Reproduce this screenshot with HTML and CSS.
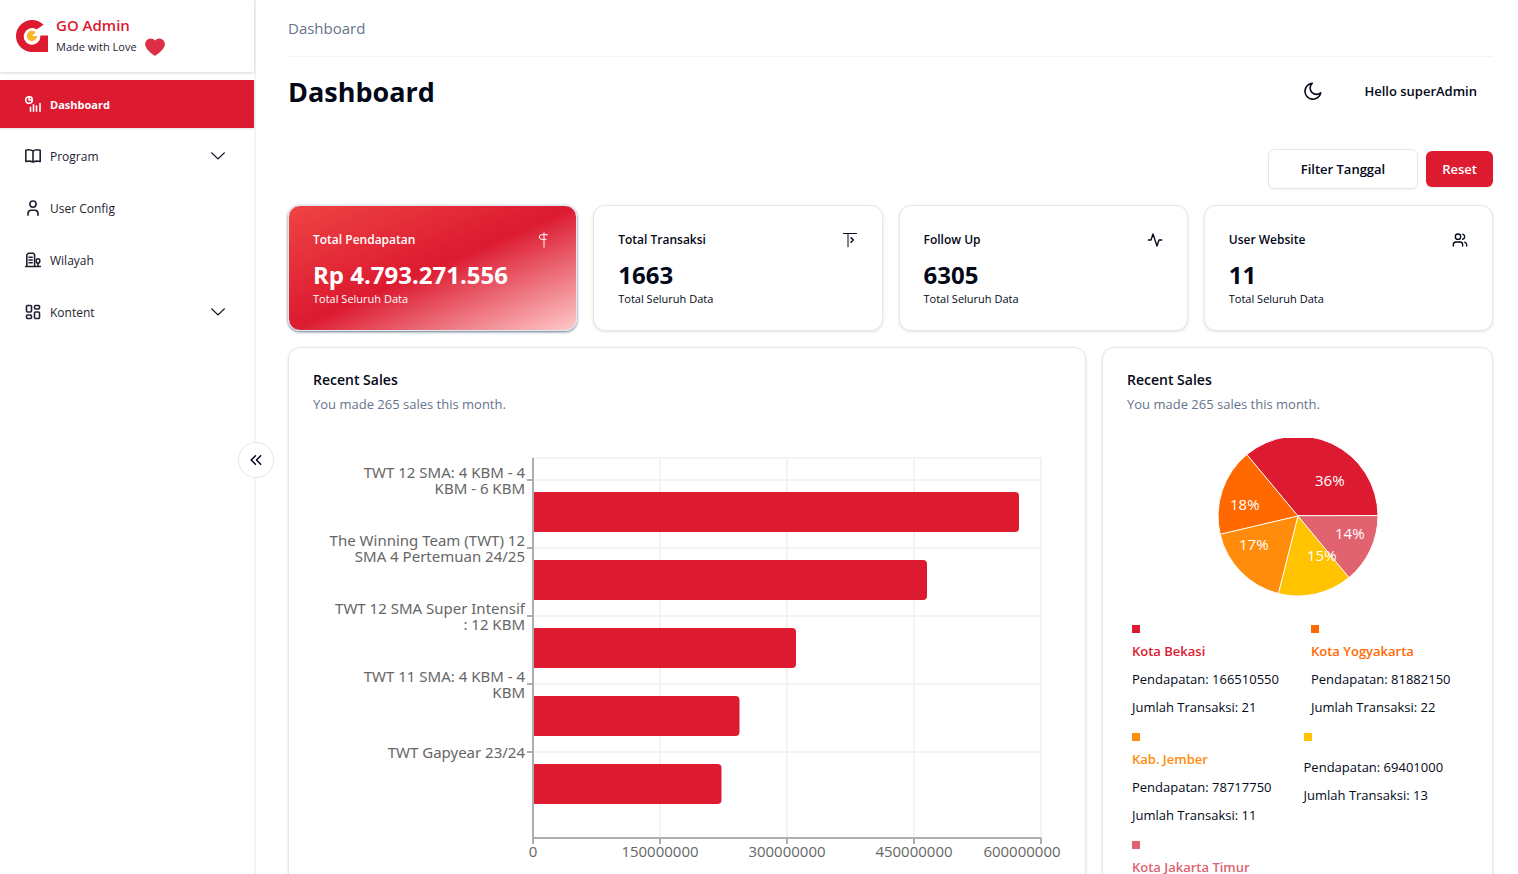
FILE: index.html
```html
<!DOCTYPE html>
<html lang="id">
<head>
<meta charset="utf-8">
<meta name="viewport" content="width=device-width, initial-scale=1">
<title>GO Admin - Dashboard</title>
<link rel="stylesheet" href="styles.css">
</head>
<body>
<div class="layout">
  <aside class="sidebar">
    <div class="brand">
      <svg class="brand-logo" viewBox="0 0 32 32" aria-hidden="true">
        <path fill="#dc1a30" d="M27.5 4.8A16 16 0 0 0 16 0 16 16 0 0 0 16 32H32V15.5H24.3A8.3 8.3 0 1 1 20.5 9.4Z"/>
        <path fill="#f9b52b" d="M16 16 19.6 12.2A5.2 5.2 0 1 0 21.2 16Z"/>
      </svg>
      <div class="brand-text">
        <span class="brand-name">GO Admin</span>
        <span class="brand-tag">Made with Love
          <svg class="heart" viewBox="0 0 20 18" aria-hidden="true"><path fill="#dd2e44" d="M19.7 5.3A5.4 5.4 0 0 0 10 2.6 5.4 5.4 0 0 0 .3 5.3C-.8 9.8 5.700 15.300 10 18 14.300 15.300 20.800 9.800 19.700 5.300Z"/></svg>
        </span>
      </div>
    </div>
    <nav class="nav">
      <a class="nav-item active" href="#">
        <svg class="icon" viewBox="0 0 16 16" aria-hidden="true"><circle cx="4" cy="4" r="3.300"/><path d="M4 1v3h3"/><path d="M5.500 15.200v-4M8.500 15.200v-6.500M11.500 15.200V10M15 15.200V7.500"/></svg>
        <span>Dashboard</span>
      </a>
      <a class="nav-item" href="#">
        <svg class="icon" viewBox="0 0 16 16" aria-hidden="true"><path d="M8 3.200C6.500 1.800 3.500 1.600.8 2.200v11.300c2.700-.5 5.700-.3 7.200.6 1.500-.9 4.500-1.100 7.200-.6V2.200C12.500 1.600 9.500 1.800 8 3.200ZM8 3.200v10.900"/></svg>
        <span>Program</span>
        <svg class="chevron" viewBox="0 0 14 8" aria-hidden="true"><path d="m.7.9 6.300 6 6.300-6"/></svg>
      </a>
      <a class="nav-item" href="#">
        <svg class="icon" viewBox="0 0 16 16" aria-hidden="true"><circle cx="8" cy="4.100" r="3.100"/><path d="M3 15.200v-1.700c0-2 1.300-3.300 3.200-3.300h3.600c1.900 0 3.200 1.300 3.200 3.300v1.700"/></svg>
        <span>User Config</span>
      </a>
      <a class="nav-item" href="#">
        <svg class="icon" viewBox="0 0 16 16" aria-hidden="true"><path d="M.7 14.500h14.600M1.800 14.500V3L3.400 1.300h5L9.600 2.800v11.700M4 5.200h3.200M4 8h3.200M4 10.800h3.200M13 14.500v-3.500"/><ellipse cx="13" cy="9" rx="1.800" ry="2.200"/></svg>
        <span>Wilayah</span>
      </a>
      <a class="nav-item" href="#">
        <svg class="icon" viewBox="0 0 16 16" aria-hidden="true"><rect x="1.500" y="1.500" width="5" height="6.500" rx="1"/><rect x="9.500" y="1.500" width="5" height="3.500" rx="1"/><rect x="1.500" y="11" width="5" height="3.500" rx="1"/><rect x="9.500" y="8" width="5" height="6.500" rx="1"/></svg>
        <span>Kontent</span>
        <svg class="chevron" viewBox="0 0 14 8" aria-hidden="true"><path d="m.7.9 6.300 6 6.300-6"/></svg>
      </a>
    </nav>
    <button class="collapse" type="button" aria-label="Collapse sidebar">
      <svg viewBox="0 0 12 10" aria-hidden="true"><path d="M5.500.8 1.200 5l4.300 4.200M10.700.8 6.400 5l4.300 4.200"/></svg>
    </button>
  </aside>

  <main class="main">
    <header class="crumbs"><a href="#">Dashboard</a></header>
    <div class="title-row">
      <h1>Dashboard</h1>
      <div class="user">
        <button class="theme" type="button" aria-label="Toggle theme">
          <svg viewBox="0 0 18 18" aria-hidden="true"><path d="M8.300 1.200A6.200 6.200 0 0 0 16.800 10.800 8 8 0 1 1 8.300 1.200Z"/></svg>
        </button>
        <button class="hello" type="button">Hello superAdmin</button>
      </div>
    </div>
    <div class="actions">
      <button class="btn-outline" type="button">Filter Tanggal</button>
      <button class="btn-red" type="button">Reset</button>
    </div>

    <section class="stats">
      <article class="card stat featured">
        <div class="stat-head"><h2>Total Pendapatan</h2>
          <svg class="stat-icon" viewBox="0 0 16 16" aria-hidden="true"><path d="M8 .8v14.400M11.500 2.700H5.700a2.200 2.200 0 0 0 0 4.600H10"/></svg></div>
        <p class="value">Rp 4.793.271.556</p><p class="note">Total Seluruh Data</p>
      </article>
      <article class="card stat">
        <div class="stat-head"><h2>Total Transaksi</h2>
          <svg class="stat-icon" viewBox="0 0 16 16" aria-hidden="true"><path d="M1.500 1.500h13M6 1.500v13.300"/><path stroke-width="1.500" d="M9 5.700l2.300 2.300L9 10.300"/></svg></div>
        <p class="value">1663</p><p class="note">Total Seluruh Data</p>
      </article>
      <article class="card stat">
        <div class="stat-head"><h2>Follow Up</h2>
          <svg class="stat-icon" viewBox="0 0 24 24" stroke-width="2" aria-hidden="true"><path d="M22 12h-4l-3 9L9 3l-3 9H2"/></svg></div>
        <p class="value">6305</p><p class="note">Total Seluruh Data</p>
      </article>
      <article class="card stat">
        <div class="stat-head"><h2>User Website</h2>
          <svg class="stat-icon" viewBox="0 0 24 24" stroke-width="2" aria-hidden="true"><path d="M16 21v-2a4 4 0 0 0-4-4H6a4 4 0 0 0-4 4v2"/><circle cx="9" cy="7" r="4"/><path d="M22 21v-2a4 4 0 0 0-3-3.870M16 3.130a4 4 0 0 1 0 7.750"/></svg></div>
        <p class="value">11</p><p class="note">Total Seluruh Data</p>
      </article>
    </section>

    <section class="charts">
      <article class="card chart-card wide">
        <h2>Recent Sales</h2>
        <p class="sub">You made 265 sales this month.</p>
        <svg class="bar-chart" viewBox="0 0 748 450" role="img" aria-label="Sales per program">
          <g class="grid">
            <path d="M220 20H728M220 42H728M220 110H728M220 178H728M220 246H728M220 314H728"/>
            <path d="M347 20V400M474 20V400M601 20V400M728 20V400"/>
          </g>
          <g class="bars">
            <path d="M220 54H702a4 4 0 0 1 4 4v32a4 4 0 0 1-4 4H220Z"/>
            <path d="M220 122H610a4 4 0 0 1 4 4v32a4 4 0 0 1-4 4H220Z"/>
            <path d="M220 190H479a4 4 0 0 1 4 4v32a4 4 0 0 1-4 4H220Z"/>
            <path d="M220 258H422.500a4 4 0 0 1 4 4v32a4 4 0 0 1-4 4H220Z"/>
            <path d="M220 326H404.500a4 4 0 0 1 4 4v32a4 4 0 0 1-4 4H220Z"/>
          </g>
          <path class="axis" d="M220 20V406M220 400H728M214 42h6M214 110h6M214 178h6M214 246h6M214 314h6M347 400v6M474 400v6M601 400v6M728 400v6"/>
          <g class="labels end">
            <text x="212" y="40">TWT 12 SMA: 4 KBM - 4</text><text x="212" y="56">KBM - 6 KBM</text>
            <text x="212" y="108">The Winning Team (TWT) 12</text><text x="212" y="124">SMA 4 Pertemuan 24/25</text>
            <text x="212" y="176">TWT 12 SMA Super Intensif</text><text x="212" y="192">: 12 KBM</text>
            <text x="212" y="244">TWT 11 SMA: 4 KBM - 4</text><text x="212" y="260">KBM</text>
            <text x="212" y="320">TWT Gapyear 23/24</text>
          </g>
          <g class="labels mid">
            <text x="220" y="419">0</text><text x="347" y="419">150000000</text><text x="474" y="419">300000000</text><text x="601" y="419">450000000</text><text x="709" y="419">600000000</text>
          </g>
        </svg>
      </article>

      <article class="card chart-card">
        <h2>Recent Sales</h2>
        <p class="sub">You made 265 sales this month.</p>
        <svg class="pie" viewBox="-100 -78 200 158" role="img" aria-label="Sales per city">
          <g stroke="#fff">
            <path fill="#dc1a30" d="M0 0H80A80 80 0 0 0-51.200-61.500Z"/>
            <path fill="#ff6900" d="M0 0-51.200-61.500A80 80 0 0 0-77.900 18.300Z"/>
            <path fill="#ff8c0a" d="M0 0-77.900 18.300A80 80 0 0 0-19.600 77.600Z"/>
            <path fill="#ffc300" d="M0 0-19.600 77.600A80 80 0 0 0 51 61.600Z"/>
            <path fill="#e0636f" d="M0 0 51 61.600A80 80 0 0 0 80 0Z"/>
          </g>
          <g class="pie-labels">
            <text x="17" y="-30">36%</text><text x="-68" y="-6">18%</text><text x="-59" y="34">17%</text><text x="9" y="45">15%</text><text x="37" y="23">14%</text>
          </g>
        </svg>
        <ul class="legend">
          <li class="red"><i></i><strong>Kota Bekasi</strong><span>Pendapatan: 166510550</span><span>Jumlah Transaksi: 21</span></li>
          <li class="orange"><i></i><strong>Kota Yogyakarta</strong><span>Pendapatan: 81882150</span><span>Jumlah Transaksi: 22</span></li>
          <li class="amber"><i></i><strong>Kab. Jember</strong><span>Pendapatan: 78717750</span><span>Jumlah Transaksi: 11</span></li>
          <li class="yellow"><i></i><strong></strong><span>Pendapatan: 69401000</span><span>Jumlah Transaksi: 13</span></li>
          <li class="rose"><i></i><strong>Kota Jakarta Timur</strong></li>
        </ul>
      </article>
    </section>
  </main>
</div>
</body>
</html>
```
FILE: styles.css
```css
* { box-sizing: border-box; }
html { scrollbar-width: none; }
body {
  margin: 0;
  background: #fff;
  color: #020817;
  font-family: "Segoe UI", "Open Sans", "Noto Sans", sans-serif;
  font-size: 13px;
  line-height: 20px;
}
h1, h2, p, ul { margin: 0; padding: 0; }
button { font: inherit; color: inherit; background: none; border: 0; padding: 0; }
a { color: inherit; text-decoration: none; }
svg { display: block; fill: none; stroke-linecap: round; stroke-linejoin: round; }

.layout { display: flex; height: 100vh; overflow: hidden; }

.sidebar {
  position: relative;
  z-index: 1;
  flex: 0 0 256px;
  border-right: 2px solid #f1f5f9;
}
.brand {
  display: flex;
  align-items: center;
  gap: 8px;
  height: 72px;
  padding: 0 16px;
  box-shadow: 0 1px 3px rgba(0, 0, 0, .16);
}
.brand-logo { width: 32px; height: 32px; }
.brand-text { display: flex; flex-direction: column; padding-bottom: 2px; }
.brand-name { color: #dc1a30; font-size: 15px; font-weight: 600; line-height: 24px; }
.brand-tag { display: flex; align-items: center; gap: 8px; font-size: 11px; color: #1e2230; }
.heart { width: 20px; height: 18px; }

.nav { display: flex; flex-direction: column; gap: 4px; padding-top: 8px; }
.nav-item {
  display: flex;
  align-items: center;
  gap: 9px;
  height: 48px;
  padding: 0 29px 0 25px;
  font-size: 12px;
  font-weight: 500;
  color: #1e2230;
}
.nav-item span { padding-top: 2px; }
.nav-item.active {
  background: #dc1a30;
  color: #fff;
  font-size: 11px;
  font-weight: 700;
  box-shadow: 0 1px 2px rgba(0, 0, 0, .12);
}
.icon { width: 16px; height: 16px; stroke: currentColor; stroke-width: 1.6; }
.chevron { width: 14px; height: 8px; margin-left: auto; stroke: #020817; stroke-width: 1.3; }
.collapse {
  position: absolute;
  top: 442px;
  right: -20px;
  display: grid;
  place-items: center;
  width: 36px;
  height: 36px;
  border: 1px solid #e2e8f0;
  border-radius: 50%;
  background: #fff;
}
.collapse svg { width: 12px; height: 10px; stroke: #020817; stroke-width: 1.5; }

.main { flex: 1; min-width: 0; padding: 0 25px 0 32px; }
.crumbs {
  height: 57px;
  border-bottom: 1px solid #f1f5f9;
  color: #64748b;
  font-size: 15px;
  line-height: 57px;
}
.title-row { display: flex; align-items: center; justify-content: space-between; height: 68px; }
h1 { padding-top: 2px; font-size: 27px; font-weight: 700; line-height: 36px; }
.user { display: flex; align-items: center; gap: 42px; padding-right: 16px; }
.theme svg { width: 18px; height: 18px; stroke: #020817; stroke-width: 1.6; }
.hello { font-weight: 600; font-size: 13px; }
.actions {
  display: flex;
  align-items: center;
  justify-content: flex-end;
  gap: 8px;
  padding: 24px 0 16px;
}
.btn-outline, .btn-red { border-radius: 6px; font-weight: 600; }
.btn-outline { height: 40px; padding: 0 32px; border: 1px solid #e2e8f0; box-shadow: 0 1px 2px rgba(0, 0, 0, .05); }
.btn-red { height: 36px; padding: 0 16px; background: #dc1a30; color: #fff; box-shadow: 0 1px 2px rgba(0, 0, 0, .08); }

.card {
  border: 1px solid #e2e8f0;
  border-radius: 12px;
  background: #fff;
  box-shadow: 0 1px 3px rgba(0, 0, 0, .12);
}
.stats { display: grid; grid-template-columns: repeat(4, 1fr); gap: 16px; margin-bottom: 16px; }
.stat { padding: 24px; }
.stat-head { display: flex; align-items: center; justify-content: space-between; margin-bottom: 8px; }
.stat h2 { font-size: 12px; font-weight: 600; line-height: 20px; }
.stat-icon { width: 16px; height: 16px; stroke: currentColor; }
.value { padding-top: 1px; font-size: 24px; font-weight: 700; line-height: 32px; }
.note { font-size: 11px; line-height: 15px; }
.featured {
  background: linear-gradient(to bottom right, #ef4444, #dc1a30 50%, #fecaca);
  color: #fff;
  box-shadow: 0 1px 3px #64748b;
}

.charts { display: grid; grid-template-columns: repeat(3, 1fr); gap: 16px; }
.chart-card { height: 600px; padding: 20px 24px; }
.wide { grid-column: span 2; }
.chart-card h2 { font-size: 14px; font-weight: 600; line-height: 24px; }
.sub { margin-bottom: 24px; padding-top: 2px; color: #64748b; line-height: 20px; }
.bar-chart { width: 100%; overflow: visible; }
.grid { stroke: #f3f3f3; stroke-width: 2; }
.bars { fill: #dc1a30; }
.axis { stroke: #aeaeae; stroke-width: 2; stroke-linecap: butt; }
.labels { fill: #666; font-size: 15px; }
.end { font-family: "Noto Sans", sans-serif; text-anchor: end; }
.mid { text-anchor: middle; }
.pie { width: 200px; height: 158px; margin: 0 auto 29px; overflow: hidden; }
.pie-labels { fill: #fff; font-size: 15px; }

.legend { display: flex; flex-wrap: wrap; gap: 16px 32px; padding-left: 5px; list-style: none; }
.legend li { display: flex; flex-direction: column; gap: 8px; }
.legend i { width: 8px; height: 8px; background: currentColor; }
.legend strong { font-weight: 600; }
.legend span { color: #020817; }
.red { color: #dc1a30; }
.orange { color: #ff6900; }
.amber { color: #ff8c0a; }
.yellow { color: #ffc300; }
.rose { color: #e0636f; }
```
